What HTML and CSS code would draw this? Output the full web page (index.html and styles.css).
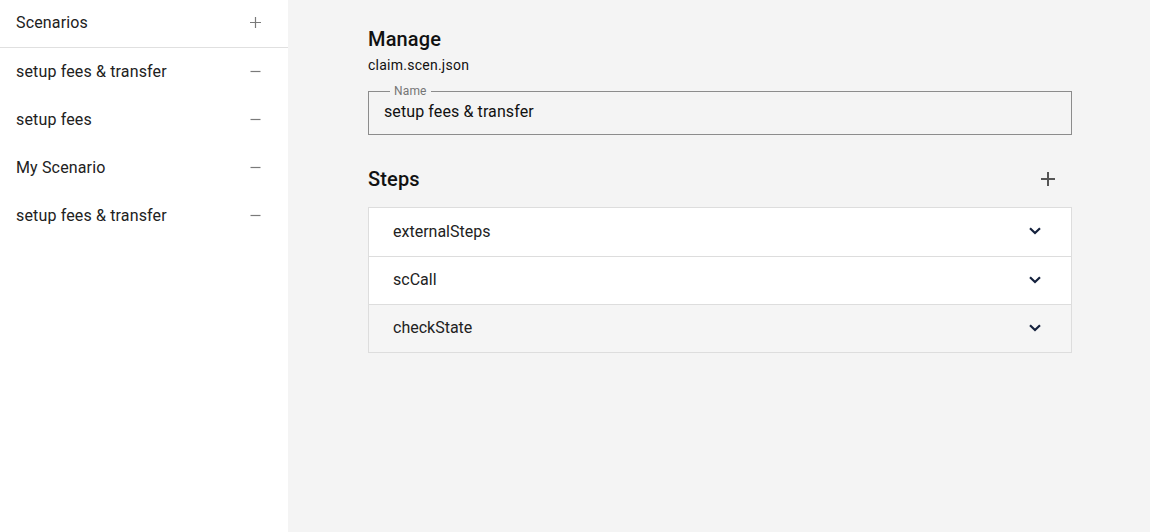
FILE: index.html
```html
<!DOCTYPE html>
<html lang="en">
<head>
<meta charset="utf-8">
<title>Scenarios</title>
<link rel="stylesheet" href="styles.css">
</head>
<body>
<div class="app">
  <aside class="sidebar">
    <div class="side-head">
      <span>Scenarios</span>
      <svg class="side-icon" width="11" height="11" viewBox="0 0 11 11"><path d="M0 5.5H11M5.5 0V11" stroke="#7a7a7a" stroke-width="1.2"/></svg>
    </div>
    <ul class="side-list">
      <li class="side-item"><span>setup fees &amp; transfer</span><svg class="side-icon" width="11" height="11" viewBox="0 0 11 11"><path d="M0.5 5.5H10.5" stroke="#7a7a7a" stroke-width="1.2"/></svg></li>
      <li class="side-item"><span>setup fees</span><svg class="side-icon" width="11" height="11" viewBox="0 0 11 11"><path d="M0.5 5.5H10.5" stroke="#7a7a7a" stroke-width="1.2"/></svg></li>
      <li class="side-item"><span>My Scenario</span><svg class="side-icon" width="11" height="11" viewBox="0 0 11 11"><path d="M0.5 5.5H10.5" stroke="#7a7a7a" stroke-width="1.2"/></svg></li>
      <li class="side-item"><span>setup fees &amp; transfer</span><svg class="side-icon" width="11" height="11" viewBox="0 0 11 11"><path d="M0.5 5.5H10.5" stroke="#7a7a7a" stroke-width="1.2"/></svg></li>
    </ul>
  </aside>
  <main class="main">
    <div class="content">
      <h1 class="title">Manage</h1>
      <p class="file">claim.scen.json</p>
      <div class="field">
        <span class="field-label">Name</span>
        <span class="field-value">setup fees &amp; transfer</span>
      </div>
      <div class="steps-head">
        <h2 class="title">Steps</h2>
        <svg class="add" width="14" height="14" viewBox="0 0 14 14"><path d="M0 7H14M7 0V14" stroke="#555" stroke-width="2"/></svg>
      </div>
      <div class="accordion">
        <div class="acc-row"><span>externalSteps</span><svg width="12" height="8" viewBox="0 0 12 8"><path d="M1 1.2L6 6L11 1.2" fill="none" stroke="#14213d" stroke-width="2.2"/></svg></div>
        <div class="acc-row"><span>scCall</span><svg width="12" height="8" viewBox="0 0 12 8"><path d="M1 1.2L6 6L11 1.2" fill="none" stroke="#14213d" stroke-width="2.2"/></svg></div>
        <div class="acc-row acc-muted"><span>checkState</span><svg width="12" height="8" viewBox="0 0 12 8"><path d="M1 1.2L6 6L11 1.2" fill="none" stroke="#14213d" stroke-width="2.2"/></svg></div>
      </div>
    </div>
  </main>
</div>
</body>
</html>
```

FILE: styles.css
```css
* { box-sizing: border-box; }
html, body { margin: 0; padding: 0; height: 100%; }
body {
  font-family: Roboto, "Liberation Sans", sans-serif;
  color: #212121;
  background: #f4f4f4;
}
.app { display: flex; height: 532px; }
.sidebar {
  width: 288px;
  flex: none;
  background: #fff;
}
.side-head {
  height: 48px;
  border-bottom: 1px solid #e0e0e0;
  display: flex;
  align-items: center;
  justify-content: space-between;
  padding: 0 27px 2px 16px;
  font-size: 16px;
  letter-spacing: 0.15px;
}
.side-list { list-style: none; margin: 0; padding: 0; }
.side-item {
  height: 48px;
  display: flex;
  align-items: center;
  justify-content: space-between;
  padding: 0 27px 1px 16px;
  font-size: 16px;
  letter-spacing: 0.15px;
}
.side-icon { display: block; }
.main { flex: 1; padding: 25px 0 0 80px; }
.content { width: 704px; }
.title {
  margin: 0;
  font-size: 20px;
  line-height: 28px;
  font-weight: 500;
  letter-spacing: 0.15px;
  color: #111;
}
.file {
  margin: 0;
  font-size: 14px;
  line-height: 24px;
  letter-spacing: 0.25px;
  color: #111;
}
.field {
  position: relative;
  margin-top: 14px;
  height: 44px;
  border: 1px solid #8c8c8c;
  display: flex;
  align-items: center;
  padding: 0 15px 3px;
}
.field-label {
  position: absolute;
  top: -8px;
  left: 21px;
  padding: 0 4px;
  background: #f4f4f4;
  font-size: 12px;
  line-height: 14px;
  letter-spacing: 0.15px;
  color: #757575;
}
.field-value { font-size: 16px; letter-spacing: 0.1px; color: #111; }
.steps-head {
  margin-top: 20px;
  height: 48px;
  display: flex;
  align-items: center;
  justify-content: space-between;
  padding-right: 17px;
}
.add { display: block; }
.accordion {
  margin-top: 4px;
  border: 1px solid #dddddd;
  background: #fff;
}
.acc-row {
  height: 48px;
  display: flex;
  align-items: center;
  justify-content: space-between;
  padding: 0 30px 2px 24px;
  font-size: 16px;
  color: #222;
  border-top: 1px solid #dddddd;
}
.acc-row:first-child { border-top: none; }
.acc-row svg { display: block; }
.acc-muted { background: #f5f5f5; }
```
